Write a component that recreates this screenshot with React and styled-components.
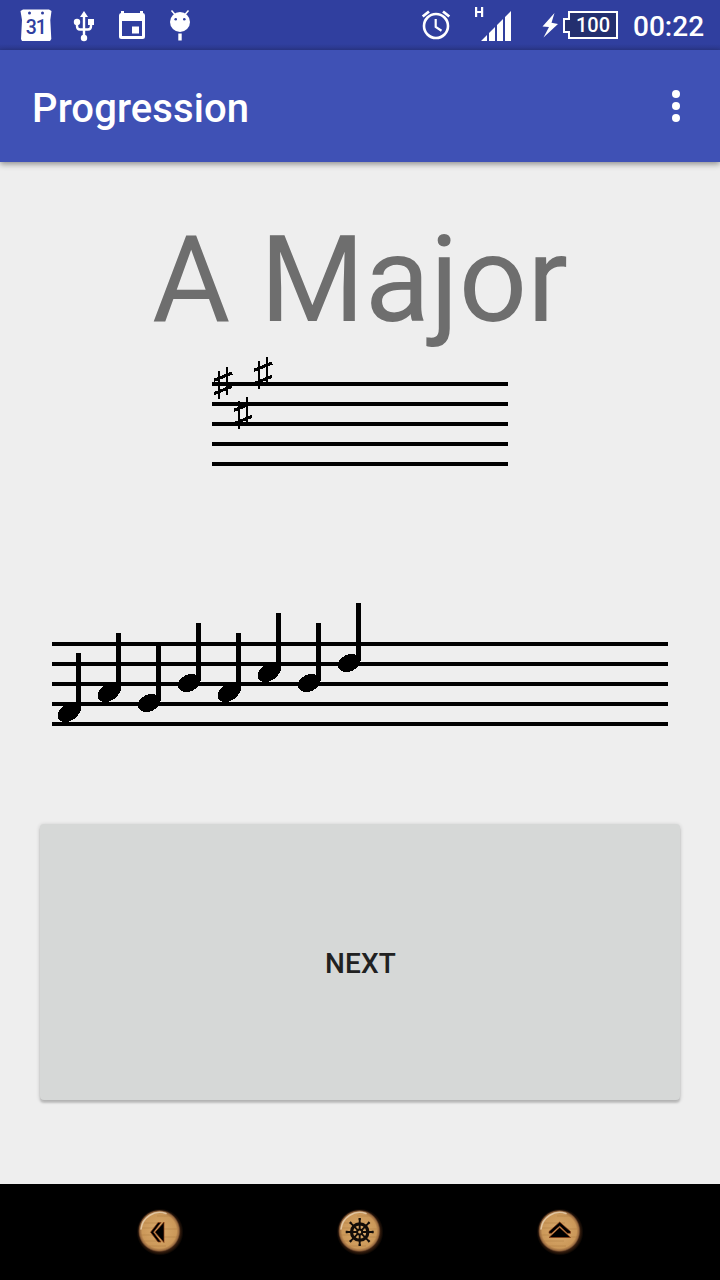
import React from "react";
import styled, { createGlobalStyle } from "styled-components";

const GlobalStyle = createGlobalStyle`
  * { box-sizing: border-box; }
  body { margin: 0; background: #eeeeee; }
`;

const Screen = styled.div`
  width: 720px;
  height: 1280px;
  display: flex;
  flex-direction: column;
  background: #eeeeee;
  font-family: Roboto, "Liberation Sans", sans-serif;
  overflow: hidden;
`;

const StatusBar = styled.header`
  height: 50px;
  flex: none;
  display: flex;
  justify-content: space-between;
  background: linear-gradient(#303f9f 0 44px, #2c3990 50px);
  color: #fff;
`;

const StatusGroup = styled.div`
  display: flex;
  align-items: flex-start;
`;

const StatusIcon = styled.svg`
  display: block;
  flex: none;
  fill: #fff;
`;

const Clock = styled.time`
  width: 90px;
  padding-left: 3px;
  font-size: 28px;
  font-weight: 500;
  line-height: 53px;
  white-space: nowrap;
`;

const AppBar = styled.div`
  height: 112px;
  flex: none;
  display: flex;
  align-items: center;
  justify-content: space-between;
  padding: 0 32px;
  background: #3f51b5;
  color: #fff;
  box-shadow: 0 2px 6px rgba(0, 0, 0, 0.42);
`;

const Title = styled.h1`
  margin: 6px 0 0;
  font-size: 40px;
  font-weight: 500;
  line-height: 48px;
  letter-spacing: 0.1px;
`;

const MenuButton = styled.button`
  display: flex;
  flex-direction: column;
  gap: 4px;
  padding: 0;
  margin: 0 8px 0 0;
  border: 0;
  background: none;
`;

const Dot = styled.span`
  width: 8px;
  height: 8px;
  border-radius: 50%;
  background: #fff;
`;

const Content = styled.main`
  flex: 1;
  display: flex;
  flex-direction: column;
  align-items: center;
  padding-top: 47px;
`;

const KeyName = styled.h2`
  margin: 0;
  height: 141px;
  line-height: 142px;
  font-size: 120px;
  font-weight: 400;
  color: #6e6e6e;
  white-space: nowrap;
`;

const Score = styled.svg`
  display: block;
  flex: none;
  margin-top: ${(p) => p.$gap}px;
`;

const NextButton = styled.button`
  width: 640px;
  height: 276px;
  margin: 84px 0 0;
  padding: 3px 0 0 1px;
  border: 0;
  border-radius: 4px;
  background: #d6d8d7;
  box-shadow: 0 3px 2px rgba(0, 0, 0, 0.14), 0 1px 4px rgba(0, 0, 0, 0.2);
  color: #212121;
  font-family: inherit;
  font-size: 28px;
  font-weight: 500;
  letter-spacing: 0.2px;
`;

const NavBar = styled.nav`
  height: 96px;
  flex: none;
  display: flex;
  justify-content: center;
  align-items: center;
  gap: 140px;
  background: #000;
`;

const NavIcon = styled.svg`
  display: block;
  width: 60px;
  height: 60px;
`;

const LINES = [0, 1, 2, 3, 4];
const SHARPS = [
  [0, 0],
  [20, 30],
  [40, -10],
];
const NOTES = [713, 693, 703, 683, 693, 673, 683, 663];
const STEEP = [true, true, false, false, true, true, false, false];
const SPOKES = [0, 45, 90, 135, 180, 225, 270, 315];

function KeySignature() {
  return (
    <Score $gap={0} width="296" height="120" viewBox="212 350 296 120" shapeRendering="crispEdges">
      {LINES.map((n) => (
        <rect key={n} x="212" y={382 + n * 20} width="296" height="4" />
      ))}
      {SHARPS.map(([x, y]) => (
        <g key={x} transform={`translate(${x} ${y})`}>
          <rect x="218" y="371" width="2" height="28" />
          <rect x="226" y="367" width="2" height="28" />
          <path d="M214 380.3L232 373.1M214 393.7L232 386.3" stroke="#000" strokeWidth="3.1" />
        </g>
      ))}
    </Score>
  );
}

function Melody() {
  return (
    <Score $gap={120} width="616" height="150" viewBox="52 590 616 150" shapeRendering="crispEdges">
      {LINES.map((n) => (
        <rect key={n} x="52" y={642 + n * 20} width="616" height="4" />
      ))}
      {NOTES.map((y, i) => (
        <g key={i} transform={`translate(${69 + i * 40} ${y})`}>
          <ellipse
            cx={STEEP[i] ? 0.3 : 0}
            cy={STEEP[i] ? -0.5 : 0}
            rx={STEEP[i] ? 12.4 : 11.7}
            ry={8.4}
            transform={`rotate(${STEEP[i] ? -32 : -22})`}
          />
          <rect x="7" y="-60" width="5" height="58" />
        </g>
      ))}
    </Score>
  );
}

function WoodDisc({ id, children }) {
  return (
    <NavIcon viewBox="0 2 60 60">
      <defs>
        <radialGradient id={id} cx="50%" cy="50%" r="50%">
          <stop offset="0" stopColor="#d9aa6c" />
          <stop offset="0.82" stopColor="#cb9859" />
          <stop offset="0.93" stopColor="#9c6c40" />
          <stop offset="1" stopColor="#3d2416" />
        </radialGradient>
        <radialGradient id={`${id}-glow`}>
          <stop offset="0.8" stopColor="#4a2812" />
          <stop offset="1" stopColor="#000" />
        </radialGradient>
      </defs>
      <circle cx="30" cy="32" r="23.5" fill={`url(#${id}-glow)`} />
      <circle cx="29.3" cy="31" r="21" fill={`url(#${id})`} />
      <path d="M13 23h22M12 28h12m10 1h13M11 35h15m8 2h13M14 41h20M19 46h17M27 16h14" stroke="#a9783d" strokeWidth="1" opacity="0.45" fill="none" />
      <path d="M11 29A18.8 18.8 0 0 1 36 13.5" stroke="#fff1d8" strokeWidth="1.6" strokeLinecap="round" opacity="0.6" fill="none" />
      {children}
    </NavIcon>
  );
}

export default function App() {
  return (
    <>
      <GlobalStyle />
      <Screen>
        <StatusBar>
          <StatusGroup>
            <StatusIcon width="210" height="50" viewBox="0 0 210 50">
              <path d="M23 9.5H49L51.5 11L50.3 20L51.3 39L50 41H22L21 39L22 20L20.5 11Z" />
              <circle cx="29.5" cy="13" r="1.5" fill="#303f9f" />
              <circle cx="42.5" cy="13" r="1.5" fill="#303f9f" />
              <text x="35.7" y="34.3" textAnchor="middle" fontSize="19.5" fontWeight="500" fill="#303f9f" letterSpacing="-1.2">31</text>
              <path d="M84 11L88 17H80ZM88 19H94V25H88Z" />
              <circle cx="77" cy="22" r="3.2" />
              <circle cx="84" cy="38" r="3.2" />
              <path d="M84 15V37M77 22V26Q77 29.5 80 29.5H88Q91 29.5 91 26V23" fill="none" stroke="#fff" strokeWidth="2.4" />
              <path fillRule="evenodd" d="M121 11H124V13H140V11H143V13Q145 13 145 15.5V36.5Q145 39 142.5 39H121.5Q119 39 119 36.5V15.5Q119 13 121 13ZM122 21V36H142V21Z" />
              <rect x="132" y="26.5" width="7" height="7" />
              <circle cx="180" cy="22" r="10" />
              <path d="M171.5 10.5L175 14.5M188.5 10.5L185 14.5" stroke="#fff" strokeWidth="1.5" />
              <circle cx="175.7" cy="19.3" r="1.3" fill="#303f9f" />
              <circle cx="184.3" cy="19.3" r="1.3" fill="#303f9f" />
              <rect x="178.3" y="33.5" width="3.4" height="7" />
            </StatusIcon>
          </StatusGroup>
          <StatusGroup>
            <StatusIcon width="220" height="50" viewBox="410 0 220 50">
              <g fill="none" stroke="#fff">
                <circle cx="436" cy="26" r="12" strokeWidth="2.6" />
                <path d="M435.7 19V27L441.5 30.7" strokeWidth="2.2" />
                <path d="M422.7 16.5L429 11.5M449.3 16.5L443 11.5" strokeWidth="2.8" />
              </g>
              <path d="M475 7H477.2V11H481V7H483.2V17H481V13H477.2V17H475Z" />
              <path d="M481 41L487 35V41ZM489 33L495 27V41H489ZM497 25L503 19V41H497ZM505 17L511 11V41H505Z" />
              <path d="M554.5 13L542.5 26.5L549 27L543.5 37.5L558 24L551.5 22.8Z" />
              <path d="M569 12H617V38H569V32H564V19H569Z" fill="#232f6f" stroke="#fff" strokeWidth="2" />
              <text x="593" y="32.2" textAnchor="middle" fontSize="20" fontWeight="500">100</text>
            </StatusIcon>
            <Clock>00:22</Clock>
          </StatusGroup>
        </StatusBar>
        <AppBar>
          <Title>Progression</Title>
          <MenuButton aria-label="More options">
            <Dot />
            <Dot />
            <Dot />
          </MenuButton>
        </AppBar>
        <Content>
          <KeyName>A Major</KeyName>
          <KeySignature />
          <Melody />
          <NextButton>NEXT</NextButton>
        </Content>
        <NavBar>
          <WoodDisc id="back">
            <g stroke="#8a3c14" strokeWidth="0.7">
              <path d="M34 22V42.5L25 32.2Z" />
              <path d="M28 22.5H31L23.5 32.2L31 42H28L20.5 32.2Z" />
            </g>
          </WoodDisc>
          <WoodDisc id="home">
            <g transform="translate(29.7 32)" stroke="#130d09" fill="none">
              <circle r="8.2" strokeWidth="3.2" />
              <circle r="2.6" strokeWidth="2" />
              {SPOKES.map((a) => (
                <path key={a} d="M0 -2V-14M-1.2 -13H1.2" strokeWidth="1.9" transform={`rotate(${a})`} />
              ))}
            </g>
          </WoodDisc>
          <WoodDisc id="recent">
            <g stroke="#8a3c14" strokeWidth="0.7">
              <path d="M19 37.5H40.5L29.7 27.5Z" />
              <path d="M19 33.3V31.5L29.7 22L40.5 31.5V33.3H37.5L29.7 26L21.5 33.3Z" />
            </g>
          </WoodDisc>
        </NavBar>
      </Screen>
    </>
  );
}
